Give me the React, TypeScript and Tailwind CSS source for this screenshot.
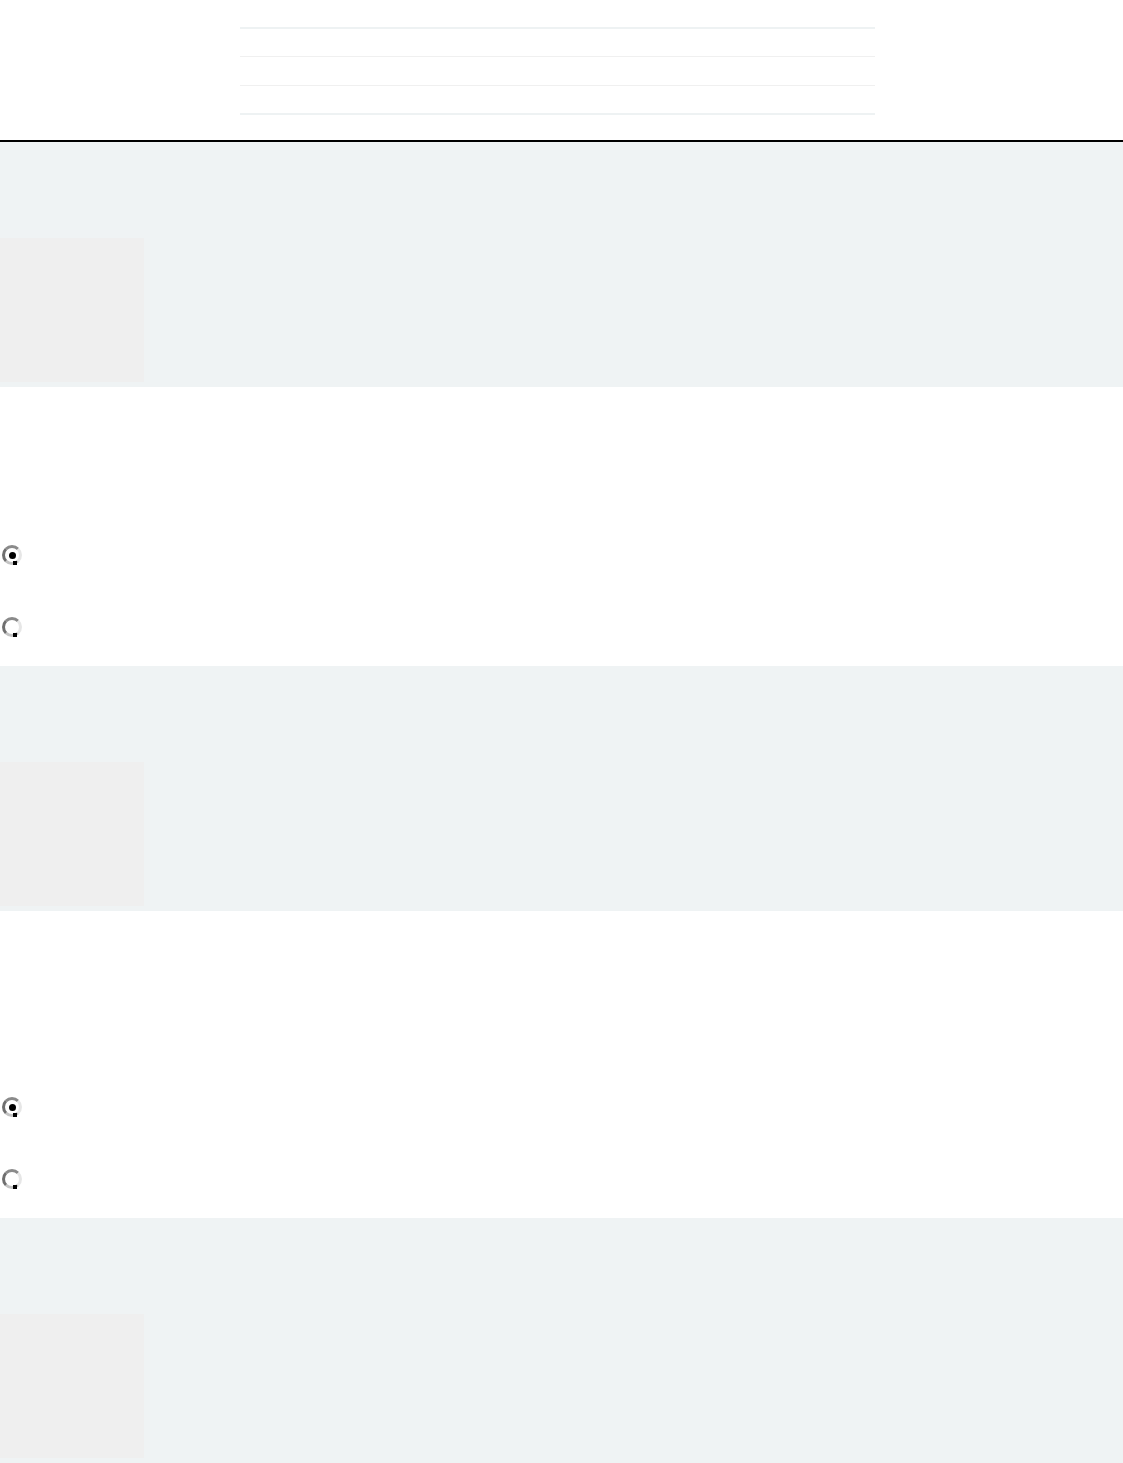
import React from "react";

function Radio({ checked }: { checked?: boolean }) {
  return (
    <span className="relative flex h-[20px] w-[20px] items-center justify-center rounded-full border-[3px] border-t-[#8a8a8a] border-l-[#6f6f6f] border-r-[#e6e6e6] border-b-[#c4c4c4] bg-white">
      {checked ? <span className="h-[7px] w-[7px] rounded-full bg-black" /> : null}
      <span className="absolute bottom-[-3px] right-[2px] h-[4px] w-[4px] bg-black" />
    </span>
  );
}

function GreySection() {
  return (
    <div className="h-[245px] bg-[#eff3f4] pt-[96px]">
      <div className="h-[144px] w-[144px] bg-[#efefef]" />
    </div>
  );
}

export default function App() {
  return (
    <div className="w-[1123px] bg-white font-['Liberation_Sans',sans-serif]">
      <div className="h-[140px] pt-[27px]">
        <div className="ml-[240px] w-[635px]">
          <div className="h-[2px] bg-[#eef2f3]" />
          <div className="mt-[27px] h-[1px] bg-[#f0f0f0]" />
          <div className="mt-[28px] h-[1px] bg-[#f0f0f0]" />
          <div className="mt-[27px] h-[2px] bg-[#eef2f3]" />
        </div>
      </div>
      <div className="h-[2px] bg-black" />
      <GreySection />
      <div className="h-[279px] bg-white pl-[2px] pt-[158px]">
        <div className="flex flex-col gap-[52px]">
          <Radio checked />
          <Radio />
        </div>
      </div>
      <GreySection />
      <div className="h-[307px] bg-white pl-[2px] pt-[186px]">
        <div className="flex flex-col gap-[52px]">
          <Radio checked />
          <Radio />
        </div>
      </div>
      <GreySection />
    </div>
  );
}
